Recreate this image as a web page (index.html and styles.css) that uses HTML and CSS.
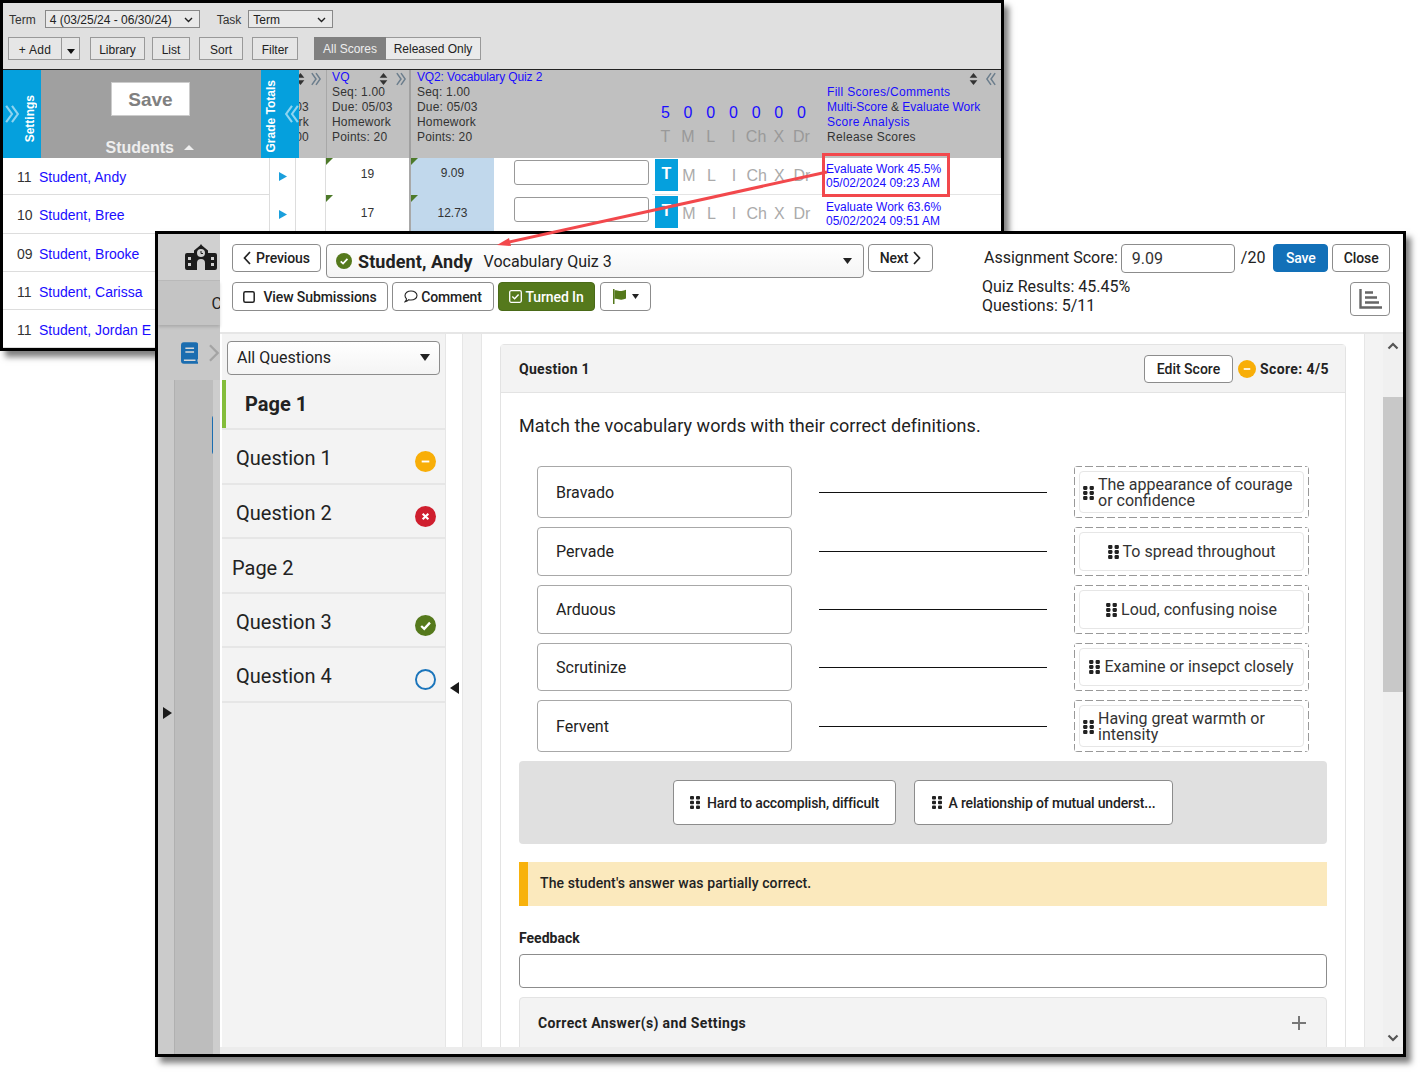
FILE: index.html
```html
<!DOCTYPE html>
<html lang="en">
<head>
  <meta charset="UTF-8" />
  <title>Evaluate Work</title>
  <link rel="stylesheet" href="styles.css">
</head>
<body>
  <svg class="defs" width="0" height="0">
    <symbol id="grip" viewBox="0 0 10 13">
      <rect x="0" y="0" width="4" height="3.6" rx="1"/><rect x="6" y="0" width="4" height="3.6" rx="1"/>
      <rect x="0" y="4.7" width="4" height="3.6" rx="1"/><rect x="6" y="4.7" width="4" height="3.6" rx="1"/>
      <rect x="0" y="9.4" width="4" height="3.6" rx="1"/><rect x="6" y="9.4" width="4" height="3.6" rx="1"/>
    </symbol>
    <symbol id="sort" viewBox="0 0 10 14">
      <path d="M5 0l4.5 5.5h-9zM5 14L.5 8.5h9z"/>
    </symbol>
    <symbol id="dbl-right" viewBox="0 0 12 16">
      <path d="M1 1l5 7-5 7M6 1l5 7-5 7" fill="none" stroke="currentColor" stroke-width="1.8"/>
    </symbol>
    <symbol id="dbl-left" viewBox="0 0 12 16">
      <path d="M6 1L1 8l5 7M11 1L6 8l5 7" fill="none" stroke="currentColor" stroke-width="1.8"/>
    </symbol>
    <symbol id="tick" viewBox="0 0 22 22">
      <path d="M6.5 11.5l3.2 3 6-6.5" fill="none" stroke="#fff" stroke-width="2.4"/>
    </symbol>
  </svg>

  <!-- Gradebook behind -->
  <section class="win win-back">
    <div class="toolbar">
      <div class="tool-row">
        <span class="tool-label">Term</span>
        <div class="mini-select term-select">4 (03/25/24 - 06/30/24)
          <svg width="9" height="6" viewBox="0 0 9 6"><path d="M1 1l3.5 3.5L8 1" fill="none" stroke="#222" stroke-width="1.4"/></svg>
        </div>
        <span class="tool-label task-label">Task</span>
        <div class="mini-select task-select">Term
          <svg width="9" height="6" viewBox="0 0 9 6"><path d="M1 1l3.5 3.5L8 1" fill="none" stroke="#222" stroke-width="1.4"/></svg>
        </div>
      </div>
      <div class="tool-row tool-row-btns">
        <div class="btn-pair">
          <button class="tool-btn add-btn">+ Add</button>
          <button class="tool-btn caret-btn"><svg width="8" height="5" viewBox="0 0 8 5"><path d="M0 0h8L4 5z" fill="#111"/></svg></button>
        </div>
        <button class="tool-btn lib-btn">Library</button>
        <button class="tool-btn list-btn">List</button>
        <button class="tool-btn sort-btn">Sort</button>
        <button class="tool-btn filter-btn">Filter</button>
        <div class="score-toggle">
          <span class="toggle-on">All Scores</span>
          <span class="toggle-off">Released Only</span>
        </div>
      </div>
    </div>

    <div class="grid-head">
      <div class="side-tab settings-tab">
        <svg class="tab-chev" width="14" height="26"><use href="#dbl-right"/></svg>
        <span class="tab-text">Settings</span>
      </div>
      <div class="students-head">
        <button class="big-save">Save</button>
        <div class="students-title">Students <svg width="10" height="5" viewBox="0 0 10 5"><path d="M5 0l5 5H0z" fill="#eee"/></svg></div>
      </div>
      <div class="side-tab totals-tab">
        <span class="tab-text">Grade Totals</span>
        <svg class="tab-chev" width="14" height="26"><use href="#dbl-left"/></svg>
      </div>
      <div class="head-col col-clip">
        <svg class="sort-icon clip-sort" width="9" height="12"><use href="#sort"/></svg>
        <svg class="chev-icon clip-chev" width="10" height="14"><use href="#dbl-right"/></svg>
        <div class="clip-text"><span>03</span><span>rk</span><span>00</span></div>
      </div>
      <div class="head-col col-vq">
        <a class="link">VQ</a>
        <svg class="sort-icon vq-sort" width="9" height="12"><use href="#sort"/></svg>
        <svg class="chev-icon vq-chev" width="10" height="14"><use href="#dbl-right"/></svg>
        <div>Seq: 1.00</div><div>Due: 05/03</div><div>Homework</div><div>Points: 20</div>
      </div>
      <div class="head-col col-vq2">
        <a class="link">VQ2: Vocabulary Quiz 2</a>
        <div>Seq: 1.00</div><div>Due: 05/03</div><div>Homework</div><div>Points: 20</div>
      </div>
      <div class="head-flags">
        <div class="flag-counts"><span>5</span><span>0</span><span>0</span><span>0</span><span>0</span><span>0</span><span>0</span></div>
        <div class="flag-names"><span>T</span><span>M</span><span>L</span><span>I</span><span>Ch</span><span>X</span><span>Dr</span></div>
      </div>
      <div class="head-links">
        <svg class="sort-icon links-sort" width="9" height="12"><use href="#sort"/></svg>
        <svg class="chev-icon links-chev" width="10" height="14"><use href="#dbl-left"/></svg>
        <a class="link wide">Fill Scores/Comments</a>
        <div><a class="link">Multi-Score</a> &amp; <a class="link">Evaluate Work</a></div>
        <a class="link wide">Score Analysis</a>
        <div class="wide">Release Scores</div>
      </div>
    </div>

    <div class="row row-short">
      <div class="cell-name"><span class="grade">11</span><a class="link">Student, Andy</a></div>
      <div class="cell-arrow"><svg width="8" height="9" viewBox="0 0 8 9"><path d="M0 0l8 4.5L0 9z" fill="#1a9fdc"/></svg></div>
      <div class="cell-empty"></div>
      <div class="cell-score"><i class="corner"></i>19</div>
      <div class="cell-quiz"><i class="corner"></i>9.09</div>
      <div class="cell-input"><input type="text"></div>
      <div class="cell-flags"><span class="flag-t">T</span><span>M</span><span>L</span><span>I</span><span>Ch</span><span>X</span><span>Dr</span></div>
      <div class="cell-eval"><a class="link">Evaluate Work 45.5%</a><a class="link">05/02/2024 09:23 AM</a></div>
    </div>
    <div class="row row-tall">
      <div class="cell-name"><span class="grade">10</span><a class="link">Student, Bree</a></div>
      <div class="cell-arrow"><svg width="8" height="9" viewBox="0 0 8 9"><path d="M0 0l8 4.5L0 9z" fill="#1a9fdc"/></svg></div>
      <div class="cell-empty"></div>
      <div class="cell-score"><i class="corner"></i>17</div>
      <div class="cell-quiz"><i class="corner"></i>12.73</div>
      <div class="cell-input"><input type="text"></div>
      <div class="cell-flags"><span class="flag-t">T</span><span>M</span><span>L</span><span>I</span><span>Ch</span><span>X</span><span>Dr</span></div>
      <div class="cell-eval"><a class="link">Evaluate Work 63.6%</a><a class="link">05/02/2024 09:51 AM</a></div>
    </div>
    <div class="row"><div class="cell-name"><span class="grade">09</span><a class="link">Student, Brooke</a></div></div>
    <div class="row"><div class="cell-name"><span class="grade">11</span><a class="link">Student, Carissa</a></div></div>
    <div class="row"><div class="cell-name"><span class="grade">11</span><a class="link">Student, Jordan E</a></div></div>
  </section>

  <!-- Evaluate work window -->
  <section class="win win-front">
    <aside class="rail">
      <div class="rail-top">
        <svg width="32" height="26" viewBox="0 0 32 26">
          <path fill-rule="evenodd" fill="#1d1d1d" d="M16 0l1 1.5 6 5V9h7a2 2 0 0 1 2 2v13a2 2 0 0 1-2 2H20v-7a4 4 0 0 0-8 0v7H2a2 2 0 0 1-2-2V11a2 2 0 0 1 2-2h7V6.500l6-5zM16 5a4 4 0 1 0 0 8 4 4 0 0 0 0-8zM3 13v3h3v-3zM3 19v3h3v-3zM26 13v3h3v-3zM26 19v3h3v-3z"/>
          <path d="M16 7v2.500h2" fill="none" stroke="#1d1d1d" stroke-width="1"/>
        </svg>
      </div>
      <div class="rail-tab"><span class="rail-c">C</span></div>
      <div class="rail-book">
        <svg width="18" height="22" viewBox="0 0 18 22">
          <path fill="#1b6db0" d="M3 0h12a3 3 0 0 1 3 3v13a2 2 0 0 1-1 1.700V20h1v2H3a3 3 0 0 1-3-3V3a3 3 0 0 1 3-3z"/>
          <path d="M4.500 6h9M4.500 10h9M3 18.500h12" stroke="#d8d8d8" stroke-width="1.500"/>
        </svg>
        <svg width="12" height="18" viewBox="0 0 12 18"><path d="M2 1l8 8-8 8" fill="none" stroke="#a4a4a4" stroke-width="2.400"/></svg>
      </div>
      <div class="rail-cols">
        <div class="rail-col-a"><span class="rail-arrow"></span></div>
        <div class="rail-col-b"><span class="rail-peek"></span></div>
        <div class="rail-col-c"></div>
      </div>
    </aside>

    <div class="main">
      <header class="eval-head">
        <div class="head-left">
          <div class="head-row">
            <button class="btn prev-btn">
              <svg width="8" height="14" viewBox="0 0 8 14"><path d="M7 1L1.500 7 7 13" fill="none" stroke="#222" stroke-width="1.700"/></svg>
              Previous
            </button>
            <div class="student-select">
              <svg class="status-icon" width="16" height="16" viewBox="0 0 22 22"><circle cx="11" cy="11" r="11" fill="#55791c"/><use href="#tick"/></svg>
              <strong>Student, Andy</strong>
              <span class="quiz-name">Vocabulary Quiz 3</span>
              <svg class="select-caret" width="9" height="6" viewBox="0 0 9 6"><path d="M0 0h9L4.500 6z" fill="#222"/></svg>
            </div>
            <button class="btn next-btn">Next
              <svg width="8" height="14" viewBox="0 0 8 14"><path d="M1 1l5.500 6L1 13" fill="none" stroke="#222" stroke-width="1.700"/></svg>
            </button>
          </div>
          <div class="head-row head-row-two">
            <button class="btn view-btn">
              <svg width="12" height="12" viewBox="0 0 12 12"><rect x=".8" y=".8" width="10.400" height="10.400" rx="1.500" fill="none" stroke="#222" stroke-width="1.500"/></svg>
              View Submissions
            </button>
            <button class="btn comment-btn">
              <svg width="14" height="13" viewBox="0 0 14 13"><path d="M7 1c3.300 0 6 1.900 6 4.500S10.300 10 7 10c-.8 0-1.500-.1-2.200-.3C4 10.600 2.800 11.500 1.200 11.700c.8-.8 1.300-1.900 1.300-2.900C1.600 7.900 1 6.800 1 5.500 1 2.900 3.700 1 7 1z" fill="none" stroke="#222" stroke-width="1.100"/></svg>
              Comment
            </button>
            <button class="btn turned-btn">
              <svg width="13" height="13" viewBox="0 0 13 13"><rect x=".7" y=".7" width="11.600" height="11.600" rx="1.500" fill="none" stroke="#fff" stroke-width="1.300"/><path d="M3.300 6.500l2.300 2.300 4-4.300" fill="none" stroke="#fff" stroke-width="1.400"/></svg>
              Turned In
            </button>
            <button class="btn flag-btn">
              <svg width="15" height="15" viewBox="0 0 15 15"><path d="M1 0h1.500v15H1z" fill="#55791c"/><path d="M2.500 1.500C5 .5 7 2.500 9.500 2c1.700-.3 3-.8 4.500-1.200v8.700c-1.500.5-2.800 1-4.500 1.200-2.500.3-4.500-1.500-7-.7z" fill="#55791c"/></svg>
              <svg width="7" height="5" viewBox="0 0 7 5"><path d="M0 0h7L3.500 5z" fill="#222"/></svg>
            </button>
          </div>
        </div>
        <div class="head-right">
          <div class="score-row">
            <label for="assign-score">Assignment Score:</label>
            <input id="assign-score" class="score-input" type="text" value="9.09">
            <span class="score-max">/20</span>
            <button class="btn save-btn">Save</button>
            <button class="btn close-btn">Close</button>
          </div>
          <div class="results-row">
            <div class="results">Quiz Results: 45.45%<br>Questions: 5/11</div>
            <button class="btn chart-btn">
              <svg width="24" height="22" viewBox="0 0 24 22"><path d="M1.500 1v18.500H23" fill="none" stroke="#666" stroke-width="2.400"/><path d="M6 4.500h8M6 9.500h12M6 14.500h14" stroke="#666" stroke-width="2.600"/></svg>
            </button>
          </div>
        </div>
      </header>

      <div class="eval-body">
        <nav class="sidebar">
          <div class="question-select">All Questions
            <svg width="10" height="7" viewBox="0 0 10 7"><path d="M0 0h10L5 7z" fill="#222"/></svg>
          </div>
          <div class="nav-item nav-page-on">Page 1</div>
          <div class="nav-item nav-q">Question 1
            <svg class="nav-icon" width="21" height="21" viewBox="0 0 22 22"><circle cx="11" cy="11" r="11" fill="#f8ae08"/><path d="M7 11h8" stroke="#fff" stroke-width="2"/></svg>
          </div>
          <div class="nav-item nav-q">Question 2
            <svg class="nav-icon" width="21" height="21" viewBox="0 0 22 22"><circle cx="11" cy="11" r="11" fill="#cf1f2e"/><path d="M8 8l6 6M14 8l-6 6" stroke="#fff" stroke-width="2.200"/></svg>
          </div>
          <div class="nav-item nav-page">Page 2</div>
          <div class="nav-item nav-q">Question 3
            <svg class="nav-icon" width="21" height="21" viewBox="0 0 22 22"><circle cx="11" cy="11" r="11" fill="#55791c"/><use href="#tick"/></svg>
          </div>
          <div class="nav-item nav-q">Question 4
            <svg class="nav-icon" width="21" height="21" viewBox="0 0 22 22"><circle cx="11" cy="11" r="10" fill="none" stroke="#1b75bb" stroke-width="2"/></svg>
          </div>
        </nav>
        <div class="collapse-bar"><span class="collapse-arrow"></span></div>
        <div class="gutter gutter-left"></div>

        <div class="content">
          <article class="card">
            <div class="card-head">
              <span class="card-title">Question 1</span>
              <button class="btn edit-btn">Edit Score</button>
              <svg width="18" height="18" viewBox="0 0 22 22"><circle cx="11" cy="11" r="11" fill="#f8ae08"/><path d="M7 11h8" stroke="#fff" stroke-width="2"/></svg>
              <span class="card-score">Score: 4/5</span>
            </div>
            <div class="card-body">
              <p class="prompt">Match the vocabulary words with their correct definitions.</p>
              <div class="match-grid">
                <div class="word">Bravado</div><div class="line"></div>
                <div class="slot"><div class="chip"><svg width="11" height="14"><use href="#grip"/></svg><span>The appearance of courage or confidence</span></div></div>
                <div class="word">Pervade</div><div class="line"></div>
                <div class="slot"><div class="chip chip-center"><svg width="11" height="14"><use href="#grip"/></svg><span>To spread throughout</span></div></div>
                <div class="word">Arduous</div><div class="line"></div>
                <div class="slot"><div class="chip chip-center"><svg width="11" height="14"><use href="#grip"/></svg><span>Loud, confusing noise</span></div></div>
                <div class="word">Scrutinize</div><div class="line"></div>
                <div class="slot"><div class="chip chip-center"><svg width="11" height="14"><use href="#grip"/></svg><span>Examine or insepct closely</span></div></div>
                <div class="word">Fervent</div><div class="line"></div>
                <div class="slot"><div class="chip"><svg width="11" height="14"><use href="#grip"/></svg><span>Having great warmth or intensity</span></div></div>
              </div>
              <div class="bank">
                <div class="bank-item bank-one"><svg width="10" height="13"><use href="#grip"/></svg>Hard to accomplish, difficult</div>
                <div class="bank-item bank-two"><svg width="10" height="13"><use href="#grip"/></svg>A relationship of mutual underst...</div>
              </div>
              <div class="alert">The student's answer was partially correct.</div>
              <label class="feedback-label" for="feedback">Feedback</label>
              <input id="feedback" class="feedback" type="text">
              <div class="accordion">
                <span>Correct Answer(s) and Settings</span>
                <svg width="16" height="16" viewBox="0 0 16 16"><path d="M8 1v14M1 8h14" stroke="#777" stroke-width="2"/></svg>
              </div>
            </div>
          </article>
        </div>

        <div class="gutter gutter-right"></div>
        <div class="scrollbar">
          <svg class="scroll-up" width="12" height="8" viewBox="0 0 12 8"><path d="M1.500 6.500L6 2l4.500 4.500" fill="none" stroke="#555" stroke-width="2.200"/></svg>
          <div class="scroll-thumb"></div>
          <svg class="scroll-down" width="12" height="8" viewBox="0 0 12 8"><path d="M1.500 1.500L6 6l4.500-4.500" fill="none" stroke="#555" stroke-width="2.200"/></svg>
        </div>
      </div>
      <div class="bottom-band"></div>
    </div>
  </section>

  <!-- Callout over both windows -->
  <div class="callout-box"></div>
  <svg class="callout-arrow" width="340" height="100" viewBox="0 0 340 100">
    <path d="M332 20L10 91" stroke="#f2484c" stroke-width="3"/>
    <path d="M2 93l12-7 2 8z" fill="#f2484c"/>
  </svg>
</body>
</html>
```

FILE: styles.css
```css
* {
  box-sizing: border-box;
}

body {
  margin: 0;
  width: 1420px;
  height: 1072px;
  position: relative;
  overflow: hidden;
  background: #fff;
  color: #222;
  font-family: Roboto, sans-serif;
}

.defs {
  position: absolute;
}

button {
  font-family: inherit;
  cursor: pointer;
}

.win {
  position: absolute;
  border: 3px solid #000;
  box-shadow: 5px 6px 6px rgba(0, 0, 0, 0.5);
  overflow: hidden;
  background: #fff;
}

.win-back {
  left: 0;
  top: 0;
  width: 1004px;
  height: 351px;
  font-family: "Liberation Sans", Arial, sans-serif;
  font-size: 12px;
}

.win-front {
  left: 155px;
  top: 231px;
  width: 1251px;
  height: 826px;
  display: flex;
}

.link {
  color: #1a0dff;
}

.wide {
  letter-spacing: 0.3px;
}

/* gradebook toolbar */
.toolbar {
  height: 67px;
  background: #e0e0e0;
  border-bottom: 1px solid #222;
  padding: 7px 0 0 5px;
}

.tool-row {
  display: flex;
  align-items: center;
  height: 18px;
}

.tool-row-btns {
  height: 23px;
  margin-top: 9px;
}

.tool-label {
  color: #333;
  margin: 1px 9px 0 1px;
}

.task-label {
  margin: 1px 7px 0 17px;
}

.mini-select {
  height: 18px;
  border: 1px solid #888;
  background: #e9e9e9;
  display: flex;
  align-items: center;
  justify-content: space-between;
  padding: 1px 6px 0 4px;
  color: #222;
}

.term-select {
  width: 155px;
}

.task-select {
  width: 85px;
}

.tool-btn {
  height: 23px;
  border: 1px solid #999;
  background: #e6e6e6;
  font-family: inherit;
  font-size: 12px;
  color: #222;
  padding: 2px 0 0;
  margin-right: 7px;
}

.btn-pair {
  display: flex;
  margin-right: 10px;
}

.btn-pair .tool-btn {
  margin: 0;
}

.add-btn {
  width: 54px;
  letter-spacing: 0.3px;
}

.caret-btn {
  width: 18px;
  border-left: 0;
}

.lib-btn {
  width: 55px;
}

.list-btn {
  width: 38px;
  margin-right: 9px;
}

.sort-btn {
  width: 44px;
  margin-right: 9px;
}

.filter-btn {
  width: 46px;
  margin-right: 16px;
}

.score-toggle {
  display: flex;
  height: 23px;
  line-height: 25px;
}

.toggle-on {
  width: 72px;
  background: #808080;
  color: #eee;
  text-align: center;
}

.toggle-off {
  width: 95px;
  border: 1px solid #999;
  border-left: 0;
  background: #eaeaea;
  text-align: center;
  line-height: 23px;
}

/* gradebook header */
.grid-head {
  height: 88px;
  display: flex;
  background: #c0c0c0;
  color: #333;
  line-height: 15px;
}

.side-tab {
  width: 38px;
  background: #05a0dd;
  color: #fff;
  display: flex;
  align-items: center;
  position: relative;
  z-index: 1;
}

.tab-text {
  writing-mode: vertical-rl;
  transform: rotate(180deg);
  font-weight: bold;
  font-size: 12px;
  white-space: nowrap;
}

.tab-chev {
  color: #8ed4f0;
}

.settings-tab {
  padding: 9px 0 0 2px;
  gap: 4px;
}

.settings-tab .tab-chev {
  margin-top: -9px;
}

.totals-tab {
  padding: 0 0 6px 3px;
  align-items: flex-end;
}

.totals-tab .tab-chev {
  margin: 0 0 25px 6px;
}

.students-head {
  width: 220px;
  background: #a0a0a0;
  display: flex;
  flex-direction: column;
  align-items: center;
}

.big-save {
  width: 79px;
  height: 34px;
  margin: 12px 1px 0 0;
  padding-top: 2px;
  border: 1px solid #ccc;
  background: #fff;
  color: #808080;
  font-family: inherit;
  font-size: 19px;
  font-weight: bold;
}

.students-title {
  margin-top: 23px;
  color: #eee;
  font-size: 16px;
  font-weight: bold;
  line-height: 18px;
  margin-right: 2px;
}

.students-title svg {
  margin: 0 0 3px 6px;
}

.head-col {
  position: relative;
  flex-shrink: 0;
  padding: 0 0 0 5px;
  border-right: 2px solid #a0a0a0;
  white-space: nowrap;
  letter-spacing: 0.2px;
}

.col-clip {
  width: 28px;
  border-right: 1px solid #a8a8a8;
  padding: 0;
  overflow: hidden;
}

.clip-text {
  position: absolute;
  left: 0;
  top: 30px;
  width: 10px;
  display: flex;
  flex-direction: column;
  align-items: flex-end;
}

.col-vq {
  width: 84px;
}

.col-vq .link {
  display: block;
}

.col-vq2 {
  width: 243px;
  border-right: 0;
  padding-left: 6px;
}

.col-vq2 .link {
  display: block;
  letter-spacing: -0.13px;
}

.sort-icon {
  position: absolute;
  fill: #333;
}

.chev-icon {
  position: absolute;
  color: #6b7d8c;
}

.clip-sort {
  left: -3px;
  top: 3px;
}

.clip-chev {
  left: 12px;
  top: 2px;
}

.vq-sort {
  left: 52px;
  top: 3px;
}

.vq-chev {
  left: 69px;
  top: 2px;
}

.head-flags {
  width: 170px;
  flex-shrink: 0;
  padding-top: 34px;
  font-size: 16px;
}

.flag-counts,
.flag-names {
  display: flex;
  height: 17px;
  align-items: center;
  margin-left: 0;
}

.flag-names {
  margin-top: 7px;
  color: #999;
}

.flag-counts span,
.flag-names span {
  width: 22.700px;
  text-align: center;
}

.flag-counts {
  color: #1a0dff;
}

.head-links {
  position: relative;
  flex: 1;
  padding: 15px 0 0 3px;
}

.head-links .link {
  display: inline;
}

.head-links > .link {
  display: block;
}

.links-sort {
  left: 145px;
  top: 3px;
}

.links-chev {
  left: 162px;
  top: 2px;
}

/* gradebook rows */
.row {
  display: flex;
  height: 38px;
  font-size: 12px;
}

.row-short {
  height: 37px;
}

.row-tall {
  height: 39px;
}

.cell-name {
  width: 266px;
  border-bottom: 1px solid #ddd;
  display: flex;
  align-items: center;
  font-size: 14px;
  color: #333;
  padding: 2px 0 0 14px;
  white-space: nowrap;
}

.grade {
  width: 22px;
}

.cell-arrow {
  width: 27px;
  border-left: 1px solid #ddd;
  border-right: 1px solid #ddd;
  display: flex;
  align-items: center;
  justify-content: center;
}

.cell-empty {
  width: 30px;
  border-right: 1px solid #ddd;
}

.cell-score {
  position: relative;
  width: 85px;
  text-align: center;
  padding-top: 9px;
  border-right: 2px solid #a8a8a8;
  color: #333;
}

.cell-quiz {
  position: relative;
  width: 83px;
  background: #c1d8ec;
  text-align: center;
  padding-top: 8px;
  color: #333;
}

.row-tall .cell-score,
.row-tall .cell-quiz {
  padding-top: 11px;
}

.corner {
  position: absolute;
  left: 0;
  top: 0;
  border-top: 7px solid #4d7a2a;
  border-right: 7px solid transparent;
}

.cell-input {
  width: 158px;
  padding: 2px 0 0 20px;
}

.cell-input input {
  display: block;
  width: 135px;
  height: 25px;
  border: 1px solid #999;
  border-radius: 3px;
  background: #fff;
}

.cell-flags {
  width: 170px;
  display: flex;
  padding-left: 3px;
  font-size: 16px;
  color: #aaa;
  align-items: flex-start;
  line-height: 36px;
  border-bottom: 1px solid #e4e4e4;
}

.row-tall .cell-flags {
  line-height: 38px;
}

.cell-flags span {
  width: 22.600px;
  text-align: center;
}

.cell-flags .flag-t {
  height: 32px;
  margin-top: 1px;
  background: #05a0dd;
  color: #fff;
  font-weight: bold;
  line-height: 30px;
}

.cell-eval {
  flex: 1;
  display: flex;
  flex-direction: column;
  padding: 4px 0 0 4px;
  line-height: 14px;
  border-bottom: 1px solid #e4e4e4;
}

.row-tall .cell-eval {
  padding-top: 5px;
}

/* front window left rail */
.rail {
  width: 62px;
  flex-shrink: 0;
  display: flex;
  flex-direction: column;
  background: #c8c8c8;
}

.rail-top {
  height: 47px;
  background: #d0d0d0;
  padding: 10px 0 0 27px;
  border-bottom: 1px solid #bbb;
}

.rail-tab {
  height: 44px;
  background: #c4c4c4;
  box-shadow: 0 2px 3px rgba(0, 0, 0, 0.15);
  overflow: hidden;
  display: flex;
  align-items: center;
  justify-content: flex-end;
}

.rail-c {
  font-size: 16px;
  margin-right: -2px;
}

.rail-book {
  height: 55px;
  display: flex;
  align-items: center;
  gap: 10px;
  padding: 0 0 0 23px;
}

.rail-cols {
  flex: 1;
  display: flex;
}

.rail-col-a {
  width: 17px;
  background: #cbcbcb;
  border-right: 1px solid #b0b0b0;
  padding: 327px 0 0 5px;
}

.rail-arrow {
  display: block;
  border-left: 9px solid #1a1a1a;
  border-top: 6px solid transparent;
  border-bottom: 6px solid transparent;
  width: 0;
}

.rail-col-b {
  width: 38px;
  background: #bdbdbd;
  padding-top: 35px;
  overflow: hidden;
}

.rail-peek {
  display: block;
  margin-left: 37px;
  width: 10px;
  height: 40px;
  border: 1px solid #1b6db0;
  border-radius: 3px;
}

.rail-col-c {
  width: 7px;
  background: #cdcdcd;
}

/* front window header */
.main {
  flex: 1;
  display: flex;
  flex-direction: column;
  min-width: 0;
}

.eval-head {
  height: 100px;
  display: flex;
  justify-content: space-between;
  padding: 10px 13px 0 12px;
  border-bottom: 2px solid #e6e6e6;
}

.head-left {
  width: 701px;
}

.head-row {
  display: flex;
  gap: 5px;
  align-items: flex-start;
}

.head-row-two {
  margin-top: 4px;
  gap: 4px;
}

.btn {
  height: 28px;
  border: 1px solid #8c8c8c;
  border-radius: 4px;
  background: #fff;
  color: #222;
  font-size: 14px;
  font-weight: 500;
  display: flex;
  align-items: center;
  justify-content: center;
  gap: 5px;
  padding: 0;
  white-space: nowrap;
  letter-spacing: -0.1px;
}

.prev-btn {
  width: 89px;
}

.next-btn {
  width: 65px;
  margin-left: -1px;
}

.student-select {
  flex: 1;
  height: 34px;
  border: 1px solid #8c8c8c;
  border-radius: 4px;
  background: linear-gradient(#fff, #f4f4f4);
  display: flex;
  align-items: center;
  padding: 0 11px 0 9px;
  font-size: 16px;
}

.student-select strong {
  font-size: 18px;
  margin: 0 11px 0 6px;
  letter-spacing: 0.1px;
}

.quiz-name {
  padding-top: 1px;
}

.select-caret {
  margin-left: auto;
}

.head-row-two .btn {
  height: 29px;
}

.view-btn {
  width: 156px;
  gap: 8px;
}

.comment-btn {
  width: 102px;
  gap: 3px;
}

.head-row-two .turned-btn {
  width: 97px;
  margin-left: 0;
  gap: 3px;
  background: #55791c;
  border-color: #4a6a18;
  color: #fff;
}

.flag-btn {
  width: 51px;
  margin-left: 1px;
}

.head-right {
  width: 408px;
}

.score-row {
  display: flex;
  align-items: flex-start;
  font-size: 16px;
  line-height: 28px;
  padding-left: 2px;
  white-space: nowrap;
}

.score-input {
  width: 114px;
  height: 29px;
  margin-left: 3px;
  border: 1px solid #8c8c8c;
  border-radius: 4px;
  padding: 0 0 0 10px;
  font: 16px Roboto, sans-serif;
  color: #333;
}

.score-max {
  margin: 0 8px 0 6px;
}

.save-btn {
  width: 55px;
  background: #1270b8;
  border-color: #1270b8;
  color: #fff;
  margin-right: 4px;
}

.close-btn {
  width: 58px;
}

.results-row {
  display: flex;
  justify-content: space-between;
  margin-top: 4px;
}

.results {
  font-size: 16px;
  line-height: 19px;
  padding-top: 0;
}

.btn.chart-btn {
  width: 40px;
  height: 34px;
  margin-top: 5px;
  padding-left: 2px;
}

/* front window body */
.eval-body {
  flex: 1;
  display: flex;
  min-height: 0;
}

.sidebar {
  width: 224px;
  flex-shrink: 0;
  margin-left: 2px;
  background: #f3f3f3;
  border-right: 1px solid #e6e6e6;
}

.question-select {
  width: 213px;
  height: 34px;
  margin: 7px 0 5px 5px;
  border: 1px solid #8c8c8c;
  border-radius: 4px;
  background: linear-gradient(#fff, #f4f4f4);
  display: flex;
  align-items: center;
  justify-content: space-between;
  padding: 0 9px 2px;
  font-size: 16px;
}

.nav-item {
  position: relative;
  height: 54.500px;
  border-top: 2px solid #e6e6e6;
  font-size: 20px;
  display: flex;
  align-items: center;
  padding: 4px 0 0 14px;
}

.nav-item:last-child {
  height: 56.500px;
  border-bottom: 2px solid #e6e6e6;
}

.nav-page-on {
  height: 48px;
  border-top: 0;
  border-left: 4px solid #84bd3a;
  padding: 0 0 0 19px;
  font-weight: 700;
}

.nav-page {
  padding: 5px 0 0 10px;
}

.nav-icon {
  position: absolute;
  right: 9px;
  top: 21px;
}

.collapse-bar {
  width: 17px;
  flex-shrink: 0;
  padding: 348px 0 0 4px;
  border-right: 1px solid #e6e6e6;
}

.collapse-arrow {
  display: block;
  width: 0;
  border-right: 9px solid #1a1a1a;
  border-top: 6px solid transparent;
  border-bottom: 6px solid transparent;
}

.gutter {
  background: #f3f3f3;
  flex-shrink: 0;
}

.gutter-left {
  width: 19px;
  border-right: 1px solid #e6e6e6;
}

.gutter-right {
  width: 19px;
  border-left: 1px solid #e6e6e6;
}

.content {
  width: 882px;
  flex-shrink: 0;
  padding: 10px 0 0 18px;
  overflow: hidden;
}

.card {
  width: 846px;
  border: 1px solid #e3e3e3;
  border-radius: 4px 4px 0 0;
}

.card-head {
  height: 48px;
  background: #f3f3f3;
  border-bottom: 1px solid #e3e3e3;
  display: flex;
  align-items: center;
  padding: 0 16px 0 18px;
  font-size: 14px;
  font-weight: 700;
}

.card-title {
  margin-right: auto;
  letter-spacing: 0.3px;
}

.edit-btn {
  width: 89px;
  height: 28px;
  margin-right: 5px;
  letter-spacing: 0;
}

.card-score {
  margin-left: 4px;
  letter-spacing: 0.4px;
}

.card-body {
  padding: 21px 18px 0;
}

.prompt {
  margin: 0;
  font-size: 18px;
  line-height: 24px;
  letter-spacing: 0.05px;
}

.match-grid {
  display: grid;
  grid-template-columns: 255px 228px 235px;
  grid-template-rows: 52px 49px 49px 48px 52px;
  column-gap: 27px;
  row-gap: 9px;
  margin: 28px 0 0 18px;
}

.word {
  border: 1px solid #a8a8a8;
  border-radius: 4px;
  display: flex;
  align-items: center;
  padding-left: 18px;
  font-size: 16px;
}

.line {
  align-self: center;
  height: 1px;
  background: #111;
}

.slot {
  background:
    repeating-linear-gradient(90deg, #999 0 8px, transparent 8px 11px) top / 100% 1px no-repeat,
    repeating-linear-gradient(90deg, #999 0 8px, transparent 8px 11px) bottom / 100% 1px no-repeat,
    repeating-linear-gradient(0deg, #999 0 8px, transparent 8px 11px) left / 1px 100% no-repeat,
    repeating-linear-gradient(0deg, #999 0 8px, transparent 8px 11px) right / 1px 100% no-repeat;
  border-radius: 4px;
  padding: 5px;
  display: flex;
}

.chip {
  flex: 1;
  border: 1px solid #e6e6e6;
  border-radius: 4px;
  display: flex;
  align-items: center;
  gap: 4px;
  padding: 2px 3px 0;
  font-size: 16px;
  line-height: 16px;
  color: #333;
}

.chip svg {
  flex-shrink: 0;
  fill: #222;
}

.chip-center {
  justify-content: center;
  padding: 0 3px;
}

.bank {
  height: 83px;
  margin-top: 9px;
  background: #e0e0e0;
  border-radius: 4px;
  display: flex;
  align-items: center;
  justify-content: center;
  gap: 18px;
}

.bank-item {
  height: 45px;
  border: 1px solid #8c8c8c;
  border-radius: 4px;
  background: #fff;
  display: flex;
  align-items: center;
  justify-content: center;
  gap: 7px;
  font-size: 14px;
  font-weight: 500;
  letter-spacing: -0.17px;
}

.bank-item svg {
  fill: #222;
}

.bank-one {
  width: 223px;
}

.bank-two {
  width: 259px;
}

.alert {
  height: 44px;
  margin-top: 18px;
  background: #fbe9bd;
  border-left: 9px solid #f8b20c;
  display: flex;
  align-items: center;
  padding: 0 0 2px 12px;
  font-size: 14px;
  font-weight: 500;
  letter-spacing: 0.1px;
}

.feedback-label {
  display: block;
  margin-top: 24px;
  font-size: 14px;
  font-weight: 700;
  line-height: 16px;
}

.feedback {
  display: block;
  width: 100%;
  height: 34px;
  margin-top: 8px;
  border: 1px solid #8c8c8c;
  border-radius: 4px;
}

.accordion {
  height: 60px;
  margin-top: 9px;
  background: #f3f3f3;
  border: 1px solid #e3e3e3;
  border-radius: 4px;
  display: flex;
  justify-content: space-between;
  padding: 17px 19px 0 18px;
  font-size: 14px;
  font-weight: 700;
  letter-spacing: 0.37px;
}

.scrollbar {
  position: relative;
  width: 20px;
  flex-shrink: 0;
  background: #f0f0f0;
}

.scroll-up {
  position: absolute;
  left: 4px;
  top: 8px;
}

.scroll-thumb {
  position: absolute;
  left: 0;
  right: 0;
  top: 63px;
  height: 295px;
  background: #c8c8c8;
}

.scroll-down {
  position: absolute;
  left: 4px;
  top: 700px;
}

.bottom-band {
  height: 7px;
  background: #ececec;
}

/* red callout */
.callout-box {
  position: absolute;
  left: 822px;
  top: 153px;
  width: 128px;
  height: 44px;
  border: 3px solid #f2484c;
}

.callout-arrow {
  position: absolute;
  left: 495px;
  top: 152px;
}
```
